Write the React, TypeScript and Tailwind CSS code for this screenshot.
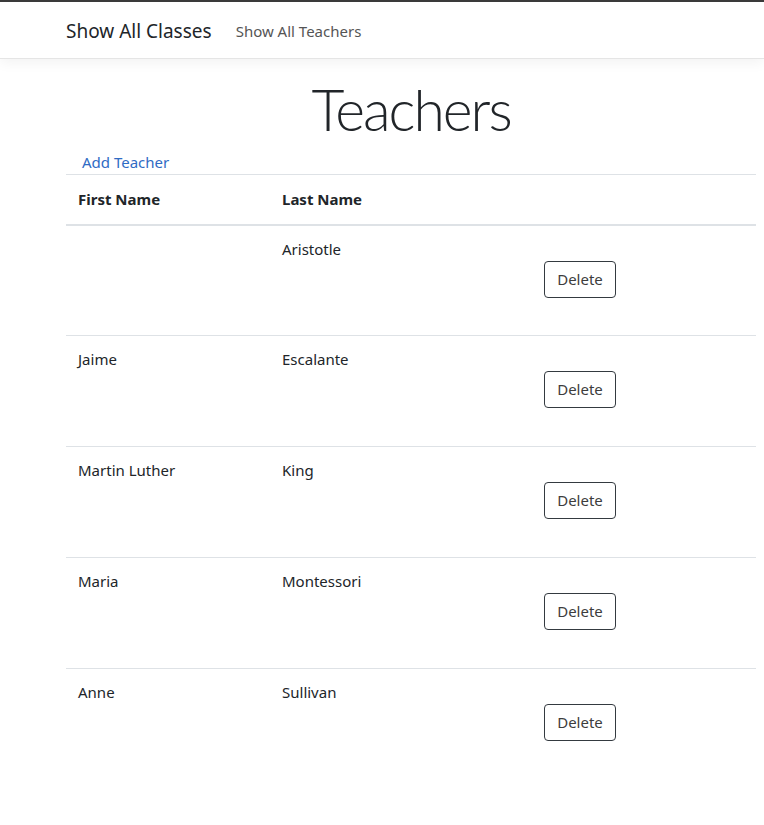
import React from 'react'

const TEACHERS = [
  { first: '', last: 'Aristotle' },
  { first: 'Jaime', last: 'Escalante' },
  { first: 'Martin Luther', last: 'King' },
  { first: 'Maria', last: 'Montessori' },
  { first: 'Anne', last: 'Sullivan' },
]

export default function App() {
  return (
    <div
      className="min-h-[825px] bg-white text-[15px] text-[#212529]"
      style={{ fontFamily: '"Noto Sans", "Open Sans", sans-serif' }}
    >
      <header className="border-t-2 border-b border-t-[#3a3a3a] border-b-[#e5e5e5] bg-white shadow-[0_4px_12px_rgba(0,0,0,0.05)]">
        <nav className="flex h-[56px] items-center pl-[66px]">
          <a className="pt-[2px] text-[19px] text-[#212529]">Show All Classes</a>
          <a className="ml-[24px] pt-[2px] text-[15px] text-[#555]">Show All Teachers</a>
        </nav>
      </header>

      <main className="ml-[66px] w-[690px]">
        <h1
          className="mt-[14px] text-center text-[57px] leading-[72px] font-light tracking-[-2px] text-[#212529]"
          style={{ fontFamily: 'Lato, "Noto Sans", sans-serif' }}
        >
          Teachers
        </h1>
        <a className="ml-[16px] block h-[29px] pt-[6px] leading-[22px] text-[#2f6bc4]">Add Teacher</a>

        <table className="w-full border-collapse">
          <thead>
            <tr className="h-[50px] border-t border-b-2 border-t-[#dee2e6] border-b-[#dee2e6] text-left">
              <th className="w-[204px] px-[12px] font-bold">First Name</th>
              <th className="w-[262px] px-[12px] font-bold">Last Name</th>
              <th />
            </tr>
          </thead>
          <tbody>
            {TEACHERS.map((t, i) => (
              <tr
                key={t.last}
                className={
                  i < TEACHERS.length - 1
                    ? 'h-[111px] border-b border-[#dee2e6] align-top'
                    : 'h-[111px] align-top'
                }
              >
                <td className="px-[12px] pt-[12px]">{t.first}</td>
                <td className="px-[12px] pt-[12px]">{t.last}</td>
                <td className="px-[12px] pt-[35px]">
                  <button
                    type="button"
                    className="h-[37px] w-[72px] rounded-[4px] border border-[#343a40] text-[#3d3d3d]"
                  >
                    Delete
                  </button>
                </td>
              </tr>
            ))}
          </tbody>
        </table>
      </main>
    </div>
  )
}
